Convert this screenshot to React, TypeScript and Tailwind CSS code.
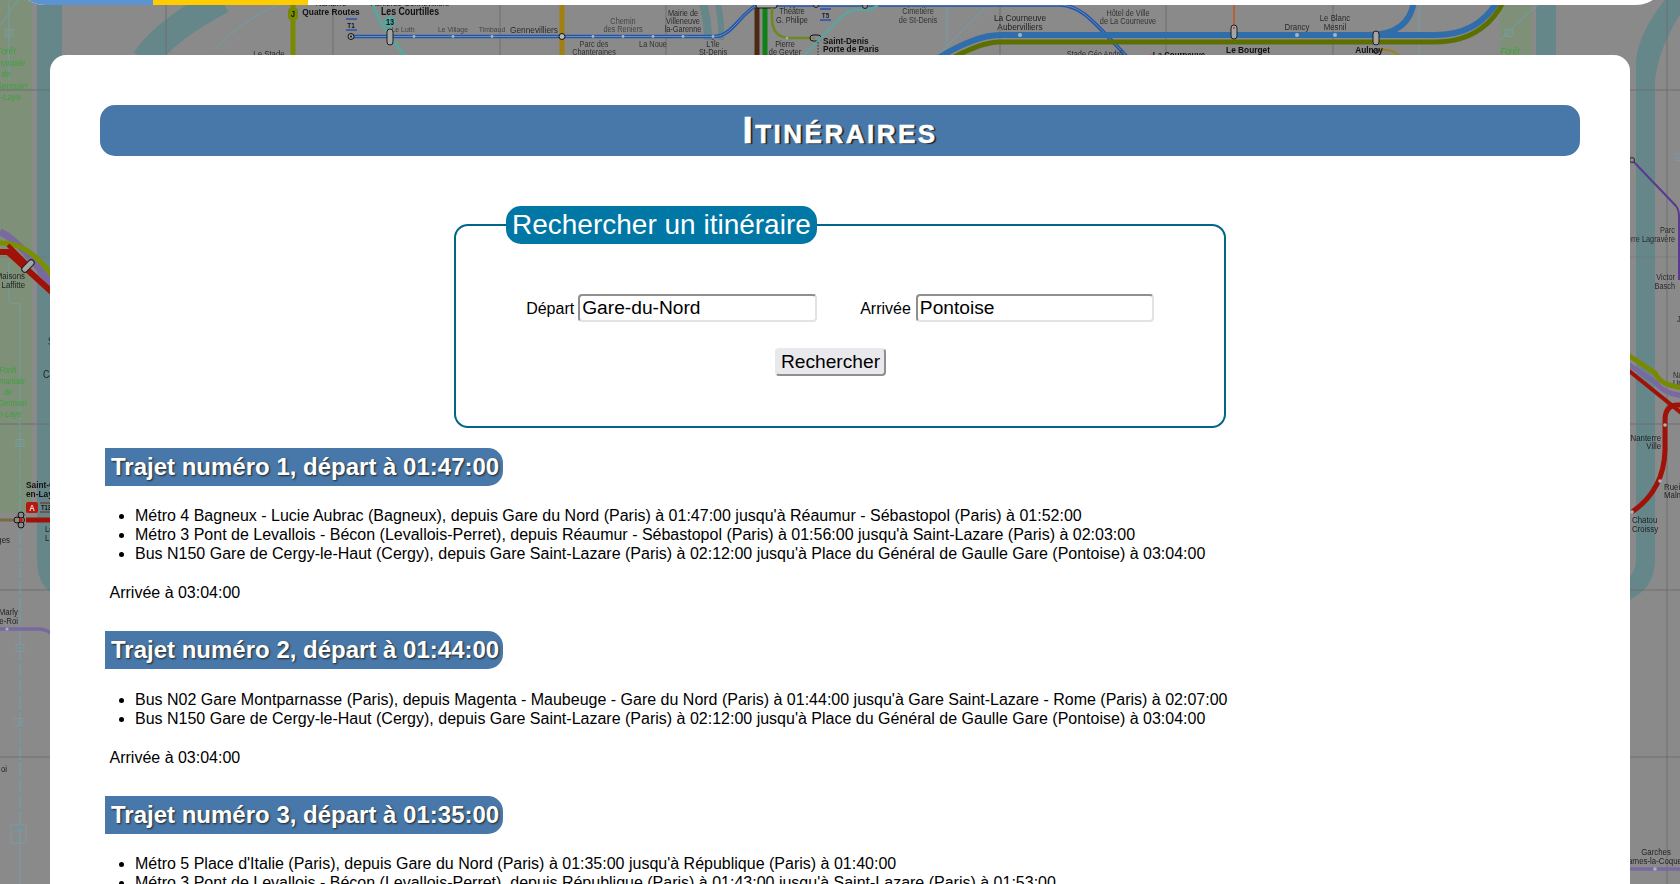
import React from "react";

type TP = { x: number; y: number; s?: string; a?: "start" | "middle" | "end"; b?: boolean; z?: number; c?: string; i?: boolean };
const T = ({ x, y, s = "", a = "middle", b, z = 8, c = "#2a2a2a", i }: TP) => (
  <text transform={`translate(${x} ${y}) scale(0.86 1)`} textAnchor={a} fontSize={z * 1.14} fontWeight={b ? 700 : 400} fontStyle={i ? "italic" : "normal"} fill={c} fontFamily="'Liberation Sans', sans-serif">
    {s}
  </text>
);

const Dot = ({ x, y, r = 1.8, f = "#a9b4bc" }: { x: number; y: number; r?: number; f?: string }) => <circle cx={x} cy={y} r={r} fill={f} />;
const Cap = ({ x, y, w = 6, h = 16, rot = 0 }: { x: number; y: number; w?: number; h?: number; rot?: number }) => (
  <rect x={x - w / 2} y={y - h / 2} width={w} height={h} rx={w / 2} fill="#a5a5a5" stroke="#1f1f1f" strokeWidth="1" transform={`rotate(${rot} ${x} ${y})`} />
);

const WATER = "#66878a";
const FOREST = "#7f9078";
const GREEN = "#3fa03f";

function MapBackground() {
  const vs = [166, 333, 500, 666, 1000, 1166, 1333, 1667];
  const hs = [90, 257, 424, 590, 757];
  return (
    <svg className="absolute inset-0 blur-[0.5px]" width="1680" height="884" viewBox="0 0 1680 884">
      <rect width="1680" height="884" fill="#8a8a8a" />
      {/* forest and water */}
      <rect x="0" y="0" width="32" height="513" fill={FOREST} />
      <path d="M37 0V560Q37 590 62 598L62 0Z" fill={WATER} />
      <rect x="1500" y="0" width="32" height="60" fill={FOREST} />
      <rect x="1536" y="0" width="20" height="60" fill={WATER} />
      <path d="M1636 60V230H1655V80Q1660 40 1690 0H1665Q1640 30 1636 60Z" fill={WATER} />
      <path d="M1636 120V560Q1636 575 1620 585L1625 602Q1655 590 1655 560V120Z" fill={WATER} />
      <path d="M222 0Q165 30 145 60" fill="none" stroke={WATER} strokeWidth="27" />
      <path d="M702 0Q708 20 708 40" fill="none" stroke={WATER} strokeWidth="8" />
      <path d="M717 0Q722 20 721 40" fill="none" stroke={WATER} strokeWidth="6" />
      {/* grid */}
      {vs.map((x) => (
        <path key={x} d={`M${x} 0V884`} stroke="#6f6f6f" strokeWidth="1" />
      ))}
      {hs.map((y) => (
        <path key={y} d={`M0 ${y}H1680`} stroke="#6f6f6f" strokeWidth="1" opacity={y === 257 ? 0.45 : 1} />
      ))}
      {/* thin light blue paths */}
      <g fill="none" stroke="#6ba3b2" strokeWidth="0.8">
        <path d="M215 50Q240 20 282 3" />
        <path d="M947 5V45" />
        <path d="M985 8L938 55" />
        <path d="M1419 5V55" />
        <path d="M9 0V80" />
        <path d="M0 25Q8 15 18 0" />
        <path d="M9 262V298Q9 304 15 304H20V884" />
        <path d="M1545 0Q1536 5 1500 40" />
      </g>
      <path d="M20 430V830" stroke="#4b95ad" strokeWidth="1.2" strokeDasharray="1.5 15" />
      {[[9, 33, "21"], [1509, 33, "21"], [20, 443, "21"], [20, 648, "1"], [18, 722, "1"], [1679, 157, "21"]].map(([x, y, s], i) => (
        <g key={i}>
          <rect x={Number(x) - 4} y={Number(y) - 3.5} width="8" height="7" fill="none" stroke="#7da2ad" strokeWidth="0.5" />
          <T x={Number(x)} y={Number(y) + 2} s={String(s)} z={5} c="#69a0b0" />
        </g>
      ))}
      <rect x="11" y="825" width="15" height="18" fill="none" stroke="#7da2ad" strokeWidth="0.6" />
      <T x={18.5} y={832} s="X409" z={4} c="#69a0b0" />
      <T x={18.5} y={841} s="19" z={4} c="#69a0b0" />

      {/* top band: J line */}
      <path d="M293 5V60" stroke="#7a8a00" strokeWidth="5" />
      <rect x="288" y="8" width="10" height="12" rx="3" fill="#7a8a00" />
      <T x={293} y={17} s="J" b z={8} c="#111" />
      <T x={331} y={14.5} s="Quatre Routes" b z={8.5} c="#111" />
      <T x={331} y={5.5} s="Nanterre" z={8} c="#111" />
      <T x={410} y={5.5} s="Asnières-Gennevilliers" z={8} c="#111" />
      <T x={410} y={15} s="Les Courtilles" b z={9} c="#111" />
      <T x={269} y={57} s="Le Stade" z={8} />
      {/* T1 */}
      <path d="M346 19H357M346 30H357" stroke="#2a52b0" strokeWidth="1.6" />
      <T x={351} y={27.5} s="T1" b z={6.5} c="#111" />
      <path d="M372 0Q378 22 390 36L408 60" stroke="#5aa59d" strokeWidth="3" fill="none" />
      <circle cx="390" cy="22" r="6" fill="#5aa59d" />
      <T x={390} y={25} s="13" b z={7.5} c="#111" />
      <path d="M351 36.500H715C732 36 740 14 757 5H1060C1082 6 1092 20 1130 60" fill="none" stroke="#2157a8" strokeWidth="3.600" />
      <path d="M351 36.500H715C732 36 740 14 757 5H1060C1082 6 1092 20 1130 60" fill="none" stroke="#8fa0c0" strokeWidth="0.7" />
      <circle cx="351" cy="36.500" r="3" fill="#9a9a9a" stroke="#111" strokeWidth="1" />
      <circle cx="351" cy="36.500" r="1" fill="#111" />
      <Cap x={390} y={37} w={6} h={16} />
      {[414, 453, 492, 593, 623, 653, 683, 713].map((x) => (
        <Dot key={x} x={x} y={36.5} r={1.4} />
      ))}
      <T x={403} y={32} s="Le Luth" z={7} c="#444" />
      <T x={453} y={32} s="Le Village" z={7} c="#444" />
      <T x={492} y={32} s="Timbaud" z={7} c="#444" />
      <T x={534} y={33} s="Gennevilliers" z={8.5} />
      <path d="M562 5V60" stroke="#a08010" strokeWidth="5" />
      <circle cx="562" cy="36.500" r="3" fill="#b5b5b5" stroke="#111" />
      <T x={623} y={24} s="Chemin" z={7.5} c="#444" />
      <T x={623} y={32} s="des Reniers" z={7.5} c="#444" />
      <T x={594} y={47} s="Parc des" z={7.5} c="#333" />
      <T x={594} y={55} s="Chanteraines" z={7.5} c="#333" />
      <T x={653} y={47} s="La Noue" z={7.5} c="#333" />
      <T x={683} y={16} s="Mairie de" z={7.5} />
      <T x={683} y={24} s="Villeneuve" z={7.5} />
      <T x={683} y={32} s="la-Garenne" z={7.5} />
      <T x={713} y={47} s="L'Île" z={7.5} />
      <T x={713} y={55} s="St-Denis" z={7.5} />
      {/* Central bundle */}
      <path d="M757 8V60" stroke="#4a2a10" strokeWidth="5" />
      <path d="M765 8V60" stroke="#128018" strokeWidth="5" />
      <rect x="756" y="3" width="21" height="5" rx="2" fill="#a5a5a5" stroke="#111" />
      <path d="M772 8V18Q772 38 790 38H810" fill="none" stroke="#6d8a20" strokeWidth="2.600" />
      <Dot x={787} y={38} r={1.3} />
      <rect x="810" y="35" width="11" height="6" rx="3" fill="#8a8a8a" stroke="#111" />
      <circle cx="814" cy="38" r="1" fill="#6d8a20" />
      <path d="M800 60L840 18Q848 10 858 10H865Q872 10 878 5" fill="none" stroke="#5aa59d" strokeWidth="2.500" />
      <circle cx="865" cy="6" r="2.500" fill="#8a8a8a" stroke="#222" />
      <circle cx="816" cy="5" r="2.500" fill="#8a8a8a" stroke="#222" />
      <path d="M818 42V60" stroke="#333" strokeWidth="1" strokeDasharray="1.5 1.5" />
      <T x={792} y={14} s="Théâtre" z={7.5} />
      <T x={792} y={23} s="G. Philipe" z={7.5} />
      <path d="M820 9H831M820 20H831" stroke="#2a52b0" strokeWidth="1.6" />
      <T x={825.500} y={18} s="T5" b z={6.5} c="#222" />
      <T x={785} y={47} s="Pierre" z={7.5} />
      <T x={785} y={55} s="de Geyter" z={7.5} />
      <T x={823} y={44} s="Saint-Denis" a="start" b z={8.5} c="#111" />
      <T x={823} y={52} s="Porte de Paris" a="start" b z={8.5} c="#111" />
      <T x={918} y={14} s="Cimetière" z={7.5} c="#333" />
      <T x={918} y={23} s="de St-Denis" z={7.5} c="#333" />
      <T x={1020} y={21} s="La Courneuve" z={8.5} c="#222" />
      <T x={1020} y={30} s="Aubervilliers" z={8.5} c="#222" />
      <T x={1128} y={16} s="Hôtel de Ville" z={7.5} c="#333" />
      <T x={1128} y={24} s="de La Courneuve" z={7.5} c="#333" />
      <T x={1095} y={57} s="Stade Géo André" z={7.5} />
      <T x={1179} y={58} s="La Courneuve" b z={8} c="#111" />
      <circle cx="1151" cy="56" r="2.500" fill="#b060a0" />
      {/* RER B & K */}
      <path d="M935 60Q975 35 1000 35H1435C1470 35 1488 18 1498 0" fill="none" stroke="#2f6eaa" strokeWidth="6" />
      <path d="M1368 35Q1410 35 1414 0" fill="none" stroke="#2f6eaa" strokeWidth="6" />
      <path d="M945 62Q980 42 1000 42H1435C1475 42 1495 20 1504 0" fill="none" stroke="#5c7000" strokeWidth="5" />
      <path d="M1234 0V28" stroke="#b8603a" strokeWidth="2" />
      <Dot x={1020} y={35} r={2} />
      <Dot x={1297} y={35} r={2} />
      <Dot x={1335} y={35} r={2} />
      <Cap x={1234} y={32} w={6} h={14} />
      <circle cx="1234" cy="28" r="1" fill="#b8402a" />
      <Cap x={1376} y={38} w={6} h={14} />
      <path d="M1380 50Q1396 48 1402 60" fill="none" stroke="#a08010" strokeWidth="2" />
      <circle cx="1376" cy="51" r="2.500" fill="#8a8a8a" stroke="#222" />
      <T x={1248} y={53} s="Le Bourget" b z={8.5} c="#111" />
      <T x={1297} y={30} s="Drancy" z={8} />
      <T x={1335} y={21} s="Le Blanc" z={8} />
      <T x={1335} y={30} s="Mesnil" z={8} />
      <T x={1369} y={53} s="Aulnay" b z={8.5} c="#111" />

      {/* Left edge */}
      <g fill="none">
        <path d="M0 232Q20 240 55 290" stroke="#7a68a0" strokeWidth="7" />
        <path d="M0 243Q30 242 55 280" stroke="#7a9000" strokeWidth="5" />
        <path d="M0 252H8L55 295" stroke="#a01208" strokeWidth="6" />
        <path d="M8 245L28 265" stroke="#a01208" strokeWidth="4" />
      </g>
      <Cap x={28} y={266} w={6} h={15} rot={45} />
      <T x={25} y={279} s="Maisons" a="end" z={8} c="#222" />
      <T x={25} y={288} s="Laffitte" a="end" z={8} c="#222" />
      {["Forêt", "domaniale", "de", "St-Germain", "en-Laye"].map((s, i) => (
        <T key={i} x={6} y={54 + i * 11.500} s={s} i c={GREEN} z={8.500} />
      ))}
      {["Forêt", "domaniale", "de", "St-Germain", "en-Laye"].map((s, i) => (
        <T key={"b" + i} x={8} y={373 + i * 11} s={s} i c={GREEN} z={7.500} />
      ))}
      <T x={1510} y={54} s="Forêt" i c={GREEN} z={8.500} />
      <T x={48} y={345} s="S" a="start" z={9} c="#222" />
      <T x={43} y={378} s="Ca" a="start" z={9} c="#222" />
      <path d="M0 520H14" stroke="#7a6a40" strokeWidth="3" />
      <path d="M26 520H60" stroke="#a01208" strokeWidth="5" />
      <circle cx="21" cy="520" r="3.500" fill="#8a8a8a" stroke="#111" />
      <circle cx="17" cy="520" r="3" fill="#8a8a8a" stroke="#111" />
      <circle cx="21" cy="515" r="3" fill="#8a8a8a" stroke="#111" />
      <circle cx="21" cy="525" r="3" fill="#8a8a8a" stroke="#111" />
      <circle cx="21" cy="520" r="2" fill="#c01a10" />
      <T x={26} y={488} s="Saint-Germain" a="start" b z={8.500} c="#111" />
      <T x={26} y={497} s="en-Laye" a="start" b z={8.500} c="#111" />
      <rect x="26" y="502" width="12" height="11" rx="2" fill="#b8180e" />
      <T x={32} y={511} s="A" b z={8} c="#ddd" />
      <path d="M40 503H60M40 512H60" stroke="#7a2010" strokeWidth="1.200" />
      <T x={41} y={510} s="T13" a="start" b z={6} c="#111" />
      <T x={45} y={532} s="Le" a="start" z={8} c="#222" />
      <T x={45} y={541} s="L" a="start" z={8} c="#222" />
      <T x={10} y={543} s="ges" a="end" z={8} c="#222" />
      <T x={18} y={615} s="Marly" a="end" z={8} c="#222" />
      <T x={18} y={624} s="le-Roi" a="end" z={8} c="#222" />
      <T x={7} y={772} s="oi" a="end" z={8} c="#222" />
      <path d="M0 629H40Q48 630 52 634" fill="none" stroke="#7a68a0" strokeWidth="3.500" />
      <Dot x={7} y={629} r={1.600} />

      {/* Right edge */}
      <path d="M1632 160L1676 206Q1679 210 1679 216V280" fill="none" stroke="#5a3a90" strokeWidth="2" />
      <circle cx="1632" cy="160" r="2.500" fill="#8a8a8a" stroke="#222" />
      <T x={1675} y={233} s="Parc" a="end" z={7.500} />
      <T x={1675} y={242} s="Pierre Lagravère" a="end" z={7.500} />
      <T x={1675} y={280} s="Victor" a="end" z={7.500} />
      <T x={1675} y={289} s="Basch" a="end" z={7.500} />
      <T x={1677} y={322} s="J" a="start" z={7.500} />
      <T x={1673} y={378} s="Na" a="start" z={7.500} />
      <T x={1673} y={386} s="Un" a="start" z={7.500} />
      <path d="M1628 355L1655 373Q1662 388 1690 388" fill="none" stroke="#7a8a00" strokeWidth="5" />
      <path d="M1628 364L1655 382Q1665 396 1690 396" fill="none" stroke="#7a68a0" strokeWidth="5" />
      <path d="M1628 370L1690 420" fill="none" stroke="#a01208" strokeWidth="4" />
      <path d="M1690 405H1678Q1665 405 1665 420V450Q1664 490 1632 512" fill="none" stroke="#a01208" strokeWidth="5" />
      <Dot x={1665} y={425} r={1.800} />
      <Dot x={1660} y={481} r={1.800} />
      <Dot x={1632} y={512} r={1.800} />
      <T x={1661} y={441} s="Nanterre" a="end" z={8} c="#222" />
      <T x={1661} y={449} s="Ville" a="end" z={8} c="#222" />
      <T x={1664} y={490} s="Rueil" a="start" z={8} c="#222" />
      <T x={1664} y={498} s="Malmaison" a="start" z={8} c="#222" />
      <T x={1632} y={523} s="Chatou" a="start" z={8} c="#222" />
      <T x={1632} y={532} s="Croissy" a="start" z={8} c="#222" />
      <T x={1656} y={855} s="Garches" z={8} c="#222" />
      <T x={1656} y={864} s="Marnes-la-Coquette" z={8} c="#222" />
      <path d="M1625 869H1680" stroke="#7a68a0" strokeWidth="3.500" />
      <Dot x={1655} y={869} r={1.800} />
    </svg>
  );
}

function Trajet({ title, steps, className = "", listClass = "mt-5" }: { title: string; steps: string[]; className?: string; listClass?: string }) {
  return (
    <section className={className}>
      <h2 className="h-[38px] w-fit rounded-r-[15px] bg-[#4878a9] pr-[4px] pl-[6px] text-[24px] leading-[38px] font-bold text-white [text-shadow:1px_1px_2px_#222]">
        {title}
      </h2>
      <ul className={`${listClass} list-disc pl-[30px] text-[16px] leading-[19px] text-black`}>
        {steps.map((s) => (
          <li key={s} className="whitespace-nowrap">
            {s}
          </li>
        ))}
      </ul>
      <p className="mt-5 pl-[4.5px] text-[16px] leading-[19px] text-black">Arrivée à 03:04:00</p>
    </section>
  );
}

export default function App() {
  return (
    <div className="relative h-[884px] overflow-hidden font-['Liberation_Sans',Arial,sans-serif]">
      <MapBackground />
      <div className="absolute top-[-45px] right-[14px] left-[15px] flex h-[50px] overflow-hidden rounded-b-[30px] bg-white">
        <div className="w-[138px] bg-[#5b94d1]" />
        <div className="w-[155px] bg-[#ffcc00]" />
      </div>
      <main className="relative mx-[50px] mt-[55px] rounded-t-[16px] bg-white px-[50px] pt-[50px] pb-10">
        <h1 className="h-[51px] rounded-[15px] bg-[#4878a9] text-center text-[37px] leading-[51px] font-bold tracking-[2.5px] text-white [font-variant:small-caps] [-webkit-text-stroke:0.5px_white] [text-shadow:2px_1px_1px_#222]">
          Itinéraires
        </h1>
        <fieldset className="mx-auto mt-[50px] w-[772px] rounded-[14px] border-2 border-[#00658a] pb-[50px]">
          <legend className="ml-[50px] h-[38px] rounded-[15px] bg-[#0077a5] px-[6px] text-[28px] leading-[38px] text-white">
            Rechercher un itinéraire
          </legend>
          <form>
            <div className="mt-[50px] flex items-center justify-center text-[16px] text-black">
              <label className="mt-[2px] mr-[4px]">Départ</label>
              <input
                readOnly
                value="Gare-du-Nord"
                className="h-[28px] w-[239px] rounded-[4px] border-2 border-t-[#8f8f8f] border-r-[#e3e3e3] border-b-[#e3e3e3] border-l-[#8f8f8f] px-[2px] text-[19.2px] text-black outline-none"
              />
              <label className="mt-[2px] mr-[5px] ml-[43px]">Arrivée</label>
              <input
                readOnly
                value="Pontoise"
                className="h-[28px] w-[238px] rounded-[4px] border-2 border-t-[#8f8f8f] border-r-[#e3e3e3] border-b-[#e3e3e3] border-l-[#8f8f8f] px-[2px] text-[19.2px] text-black outline-none"
              />
            </div>
            <div className="mt-[26px] flex justify-center pr-[19px]">
              <button
                type="button"
                className="h-[28px] rounded-[4px] border-2 border-t-[#e9e9ed] border-r-[#8f8f8f] border-b-[#8f8f8f] border-l-[#e9e9ed] bg-[#e9e9ed] px-[4px] text-[19.2px] leading-[22px] text-black"
              >
                Rechercher
              </button>
            </div>
          </form>
        </fieldset>
        <div className="pl-[5px]">
          <Trajet
            className="mt-[20px]"
            title="Trajet numéro 1, départ à 01:47:00"
            steps={[
              "Métro 4 Bagneux - Lucie Aubrac (Bagneux), depuis Gare du Nord (Paris) à 01:47:00 jusqu'à Réaumur - Sébastopol (Paris) à 01:52:00",
              "Métro 3 Pont de Levallois - Bécon (Levallois-Perret), depuis Réaumur - Sébastopol (Paris) à 01:56:00 jusqu'à Saint-Lazare (Paris) à 02:03:00",
              "Bus N150 Gare de Cergy-le-Haut (Cergy), depuis Gare Saint-Lazare (Paris) à 02:12:00 jusqu'à Place du Général de Gaulle Gare (Pontoise) à 03:04:00",
            ]}
          />
          <Trajet
            className="mt-[29px]"
            listClass="mt-[21px]"
            title="Trajet numéro 2, départ à 01:44:00"
            steps={[
              "Bus N02 Gare Montparnasse (Paris), depuis Magenta - Maubeuge - Gare du Nord (Paris) à 01:44:00 jusqu'à Gare Saint-Lazare - Rome (Paris) à 02:07:00",
              "Bus N150 Gare de Cergy-le-Haut (Cergy), depuis Gare Saint-Lazare (Paris) à 02:12:00 jusqu'à Place du Général de Gaulle Gare (Pontoise) à 03:04:00",
            ]}
          />
          <Trajet
            className="mt-[29px]"
            title="Trajet numéro 3, départ à 01:35:00"
            steps={[
              "Métro 5 Place d'Italie (Paris), depuis Gare du Nord (Paris) à 01:35:00 jusqu'à République (Paris) à 01:40:00",
              "Métro 3 Pont de Levallois - Bécon (Levallois-Perret), depuis République (Paris) à 01:43:00 jusqu'à Saint-Lazare (Paris) à 01:53:00",
            ]}
          />
        </div>
      </main>
    </div>
  );
}
